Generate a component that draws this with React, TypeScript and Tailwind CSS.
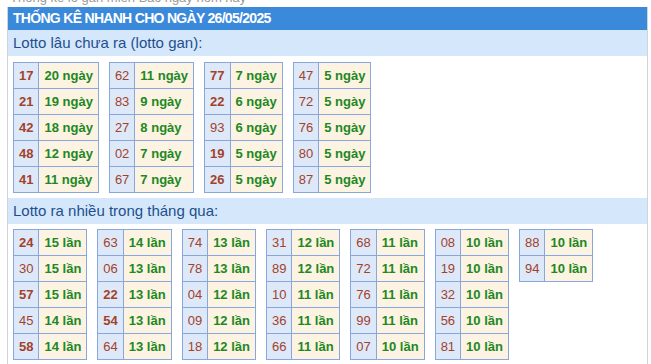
import React from 'react';

type Row = { n: string; v: string; b?: boolean };

// lotto gan tables (columns of 5)
const ganTables: Row[][] = [
  [
    { n: '17', v: '20 ngày', b: true },
    { n: '21', v: '19 ngày', b: true },
    { n: '42', v: '18 ngày', b: true },
    { n: '48', v: '12 ngày', b: true },
    { n: '41', v: '11 ngày', b: true },
  ],
  [
    { n: '62', v: '11 ngày' },
    { n: '83', v: '9 ngày' },
    { n: '27', v: '8 ngày' },
    { n: '02', v: '7 ngày' },
    { n: '67', v: '7 ngày' },
  ],
  [
    { n: '77', v: '7 ngày', b: true },
    { n: '22', v: '6 ngày', b: true },
    { n: '93', v: '6 ngày' },
    { n: '19', v: '5 ngày', b: true },
    { n: '26', v: '5 ngày', b: true },
  ],
  [
    { n: '47', v: '5 ngày' },
    { n: '72', v: '5 ngày' },
    { n: '76', v: '5 ngày' },
    { n: '80', v: '5 ngày' },
    { n: '87', v: '5 ngày' },
  ],
];

const hotTables: Row[][] = [
  [
    { n: '24', v: '15 lần', b: true },
    { n: '30', v: '15 lần' },
    { n: '57', v: '15 lần', b: true },
    { n: '45', v: '14 lần' },
    { n: '58', v: '14 lần', b: true },
  ],
  [
    { n: '63', v: '14 lần' },
    { n: '06', v: '13 lần' },
    { n: '22', v: '13 lần', b: true },
    { n: '54', v: '13 lần', b: true },
    { n: '64', v: '13 lần' },
  ],
  [
    { n: '74', v: '13 lần' },
    { n: '78', v: '13 lần' },
    { n: '04', v: '12 lần' },
    { n: '09', v: '12 lần' },
    { n: '18', v: '12 lần' },
  ],
  [
    { n: '31', v: '12 lần' },
    { n: '89', v: '12 lần' },
    { n: '10', v: '11 lần' },
    { n: '36', v: '11 lần' },
    { n: '66', v: '11 lần' },
  ],
  [
    { n: '68', v: '11 lần' },
    { n: '72', v: '11 lần' },
    { n: '76', v: '11 lần' },
    { n: '99', v: '11 lần' },
    { n: '07', v: '10 lần' },
  ],
  [
    { n: '08', v: '10 lần' },
    { n: '19', v: '10 lần' },
    { n: '32', v: '10 lần' },
    { n: '56', v: '10 lần' },
    { n: '81', v: '10 lần' },
  ],
  [
    { n: '88', v: '10 lần' },
    { n: '94', v: '10 lần' },
  ],
];

const StatTable: React.FC<{ rows: Row[] }> = ({ rows }) => (
  <table className="border-collapse self-start">
    <tbody>
      {rows.map((r) => (
        <tr key={r.n} className="h-[26px]">
          <td
            className={`border border-[#88a7dc] bg-[#dde9f9] px-[5px] text-[#a3412b] text-center ${
              r.b ? 'font-bold' : ''
            }`}
          >
            {r.n}
          </td>
          <td className="border border-[#88a7dc] bg-[#fdf3e2] px-[5px] font-bold text-[#20881f] whitespace-nowrap">
            {r.v}
          </td>
        </tr>
      ))}
    </tbody>
  </table>
);

const SectionTitle: React.FC<{ children: React.ReactNode }> = ({ children }) => (
  <div className="h-[26px] bg-[#d5e7fa] px-[5px] flex items-center text-[15px] text-[#1d4f8e]">
    {children}
  </div>
);

export default function App() {
  return (
    <div
      className="w-[651px] h-[364px] overflow-hidden bg-white"
      style={{ fontFamily: '"Liberation Sans", Arial, sans-serif' }}
    >
      {/* cut-off line above the panel */}
      <div className="h-[7px] overflow-hidden pl-[10px]">
        <div className="-mt-[10px] text-[13px] leading-[15px] text-[#9a9a9a]">Thống kê lô gan miền Bắc ngày hôm nay</div>
      </div>

      <div className="ml-[7px] w-[641px] border-x border-[#cfd4da]">
        {/* Top Header */}
        <div className="h-[23px] bg-[#3a89da] px-[5px] flex items-center text-white font-bold text-[14px] tracking-[-0.7px]">
          THỐNG KÊ NHANH CHO NGÀY 26/05/2025
        </div>

        <SectionTitle>Lotto lâu chưa ra (lotto gan):</SectionTitle>
        <div className="flex gap-[10px] px-[5px] pt-[6px] pb-[5px] text-[13px]">
          {ganTables.map((t, i) => (
            <StatTable key={i} rows={t} />
          ))}
        </div>

        <SectionTitle>Lotto ra nhiều trong tháng qua:</SectionTitle>
        <div className="flex gap-[10px] px-[5px] pt-[5px] pb-[8px] text-[13px]">
          {hotTables.map((t, i) => (
            <StatTable key={i} rows={t} />
          ))}
        </div>
      </div>
    </div>
  );
}
